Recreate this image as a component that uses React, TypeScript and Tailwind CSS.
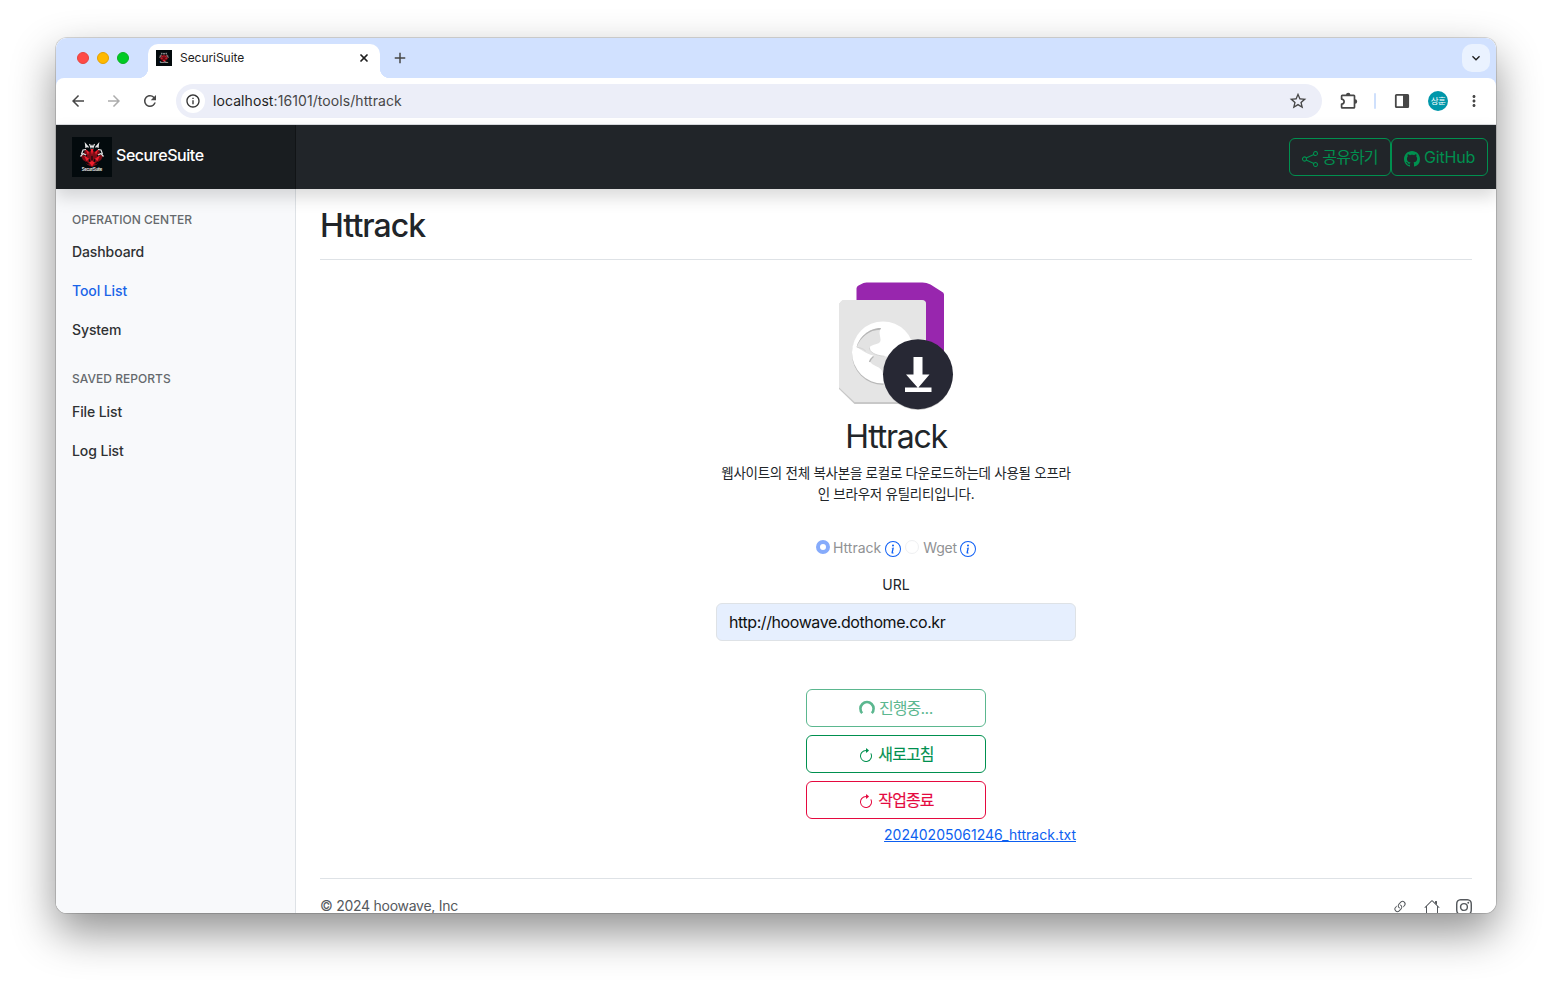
import type { ReactNode } from "react";
import { X } from "lucide-react";
import { BsShare, BsGithub, BsInfoCircle, BsArrowClockwise, BsInstagram, BsLink45Deg } from "react-icons/bs";
import {
  MdArrowBack,
  MdArrowForward,
  MdRefresh,
  MdInfoOutline,
  MdStarOutline,
  MdMoreVert,
  MdAdd,
  MdKeyboardArrowDown,
} from "react-icons/md";

function Crest({ className }: { className: string }) {
  return (
    <svg viewBox="0 0 40 40" className={className}>
      <rect width="40" height="40" fill="#030a0d" />
      <path d="M13 12l4 3 3-2 3 2 4-3 1 5 3 2-2 4-2.500 1.500-1.500 3-5 2.500-5-2.500-1.500-3L11 23l-2-4 3-2z" fill="#7d0d16" />
      <path d="M12 18.500l5.500 3.500-3 2zM28 18.500l-5.500 3.500 3 2zM18.500 12l1.500 6 1.500-6zM17 25l3 4.500 3-4.500-3-1zM13.500 12l2.500 6 1-3zM26.500 12l-2.500 6-1-3z" fill="#f01f2d" />
      <path d="M11 17l4 2M29 17l-4 2M17 22l1 3M23 22l-1 3M20 19v4M14 25l2.500 2M26 25l-2.500 2" stroke="#030a0d" strokeWidth="1.100" />
      <g fill="none" stroke="#e4e4e4" strokeWidth="1.200">
        <path d="M14 11l-.5-4 3 3.500M26 11l.5-4-3 3.500M17.500 7l1.500 3.500 1-2 1 2 1.500-3.500M9.500 17l1.500-4 3-.5M30.500 17L29 13l-3-.5" />
        <path d="M8.500 19.500l2.500-3 3 1.500M31.500 19.500l-2.500-3-3 1.500" />
      </g>
      <text x="20" y="33.600" textAnchor="middle" fontSize="4.200" fontWeight="600" fill="#f5f5f5" textLength="20.500" fontFamily="Inter, sans-serif">
        SecuriSuite
      </text>
    </svg>
  );
}

function TabStrip() {
  return (
    <div className="flex h-10 shrink-0 items-start bg-[#d1e1ff]">
      <div className="flex gap-2 pt-3.5 pl-[21px]">
        <span className="size-3 rounded-full border border-[#e5433f] bg-[#ff4a46]" />
        <span className="size-3 rounded-full border border-[#e3a100] bg-[#ffb900]" />
        <span className="size-3 rounded-full border border-[#0bb022] bg-[#00cb24]" />
      </div>
      <div className="relative mt-1.5 ml-[19px] flex h-[34px] w-[232px] items-center rounded-t-[10px] bg-white pr-2.5 pb-1.5 pl-2">
        <span className="absolute bottom-0 -left-2.5 size-2.5 bg-[radial-gradient(circle_at_0_0,transparent_10px,white_10.5px)]" />
        <span className="absolute -right-2.5 bottom-0 size-2.5 bg-[radial-gradient(circle_at_100%_0,transparent_10px,white_10.5px)]" />
        <Crest className="size-4" />
        <span className="ml-2 flex-1 text-[12px] tracking-[-0.05px] text-[#1f1f1f]">SecuriSuite</span>
        <X className="size-3 text-[#1f1f1f]" strokeWidth={3.4} />
      </div>
      <MdAdd className="mt-[11px] ml-[11px] size-[18px] text-[#474747]" />
      <div className="mt-1.5 mr-1.5 ml-auto flex size-7 items-center justify-center rounded-[10px] bg-[#eaf2ff]">
        <MdKeyboardArrowDown className="size-4 text-[#1f1f1f]" stroke="currentColor" />
      </div>
    </div>
  );
}

function Toolbar() {
  return (
    <div className="shrink-0 bg-[#d1e1ff]">
      <div className="flex h-[47px] items-center rounded-t-lg border-b border-[#dadce0] bg-white pl-[13px] text-[#474747]">
        <MdArrowBack className="size-[18px]" />
        <MdArrowForward className="ml-[18px] size-[18px] text-[#acacac]" />
        <MdRefresh className="ml-[18px] size-[18px]" />
        <div className="ml-[17px] flex h-[34px] w-[1146px] items-center rounded-full bg-[#eceef8] pl-[5px]">
          <span className="flex size-6 items-center justify-center rounded-full bg-white">
            <MdInfoOutline className="size-4 text-[#333]" />
          </span>
          <span className="ml-2 pb-0.5 text-[14px] tracking-[0.08px] whitespace-nowrap text-[#474747]">
            <span className="text-[#1f1f1f]">localhost</span>:16101/tools/httrack
          </span>
          <MdStarOutline className="mr-[14px] ml-auto size-5" />
        </div>
        <svg viewBox="0 0 20 20" className="ml-[17px] size-5" fill="none" stroke="#474747" strokeWidth="1.700">
          <path d="M3.300 4.300h11.500q.7 0 .7.700v11.200q0 .7-.7.700H3.300q-.7 0-.7-.7v-3.100a2.500 2.500 0 0 0 0-5V5q0-.7.700-.7z" strokeLinejoin="round" />
          <path d="M7 4a2.200 2.200 0 0 1 4.400 0zM16 8.300a2.200 2.200 0 0 1 0 4.400z" fill="#474747" stroke="none" />
        </svg>
        <span className="ml-[15px] h-4 w-0.5 rounded-full bg-[#cfe0fc]" />
        <svg viewBox="0 0 16 16" className="ml-[18px] size-4">
          <rect x="1.800" y="1.800" width="12.400" height="12.400" rx="0.800" fill="none" stroke="#474747" strokeWidth="1.800" />
          <rect x="9" y="1.500" width="5.500" height="13" fill="#474747" />
        </svg>
        <span className="ml-[18px] flex size-5 items-center justify-center rounded-full bg-[#0097aa] text-[8.5px] tracking-[-0.5px] text-white">
          상훈
        </span>
        <MdMoreVert className="ml-[17px] size-[18px]" />
      </div>
    </div>
  );
}

function HeaderButton({ children, width }: { children: ReactNode; width: string }) {
  return (
    <button
      className={`flex h-[38px] items-center justify-center gap-1 rounded-md border border-[#00904f] text-[16px] whitespace-nowrap text-[#00904f] ${width}`}
    >
      {children}
    </button>
  );
}

function Header() {
  return (
    <header className="relative z-10 flex h-16 shrink-0 bg-[#212529] shadow-[0_8px_16px_rgba(0,0,0,0.15)]">
      <div className="flex w-60 items-center border-r border-[#111416] bg-[#191d20] pl-4">
        <Crest className="size-10" />
        <span className="ml-1 pb-1 text-[16px] font-medium tracking-[-0.45px] text-white">SecureSuite</span>
      </div>
      <div className="ml-auto flex items-center pr-2">
        <HeaderButton width="w-[102px]">
          <BsShare className="mt-1 size-4" />
          <span className="tracking-[-0.9px]">공유하기</span>
        </HeaderButton>
        <HeaderButton width="w-[97px]">
          <BsGithub className="mt-1 size-4" />
          <span className="tracking-[-0.2px]">GitHub</span>
        </HeaderButton>
      </div>
    </header>
  );
}

function SideLink({ children, active }: { children: ReactNode; active?: boolean }) {
  return (
    <a className={`flex h-[39px] items-center text-[14px] font-medium tracking-[-0.1px] ${active ? "text-[#1a64e8]" : "text-[#2f3133]"}`}>
      {children}
    </a>
  );
}

function Sidebar() {
  return (
    <aside className="w-60 shrink-0 border-r border-[#dee2e6] bg-[#f8f9fb] pt-[22px] pl-4">
      <h6 className="h-[21px] text-[12px] leading-[18px] font-medium tracking-[0.01px] text-[#65696d]">OPERATION CENTER</h6>
      <SideLink>Dashboard</SideLink>
      <SideLink active>Tool List</SideLink>
      <SideLink>System</SideLink>
      <h6 className="mt-5 h-[23px] text-[12px] leading-[20px] font-medium tracking-[0.04px] text-[#65696d]">SAVED REPORTS</h6>
      <SideLink>File List</SideLink>
      <SideLink>Log List</SideLink>
    </aside>
  );
}

function ToolLogo() {
  return (
    <svg viewBox="0 0 128 136" className="h-[136px] w-32">
      <path d="M24.500 10.500q0-2 2-3l5-2.500q1.500-.5 3-.5h56q4 0 8 2l11 7q2.500 1 2.500 3V90h-87.500z" fill="#9826ae" />
      <path d="M11 22.500h79q4 0 4 4V126H22.500L7 111V26z" fill="#c8c8c8" />
      <path d="M10.500 22h79.500q4 0 4 4v98H22.500L7 109.500V26q1-2 3.500-4z" fill="#e5e5e5" />
      <circle cx="51" cy="75.800" r="31" fill="#b8b8b8" />
      <circle cx="51" cy="74.500" r="31" fill="#fff" />
      <path
        d="M24.700 69C27 60 36 50 49 50c-2 3-1.500 5.500-1 8 .5 3 1 4.500 0 6-1.500 2-5 2-9 4-3.500 2 0 6 2.500 7.500 4 2 8 3 13 3l6-.5v32l-9-2c0-6 0-12-2-16-3-4-9-4-11.500-8.500 0-2 1.500-4 3.500-6-3 0-10-4-16.800-8.500z"
        fill="#e3e3e3"
      />
      <path d="M24.700 69C27 60 36 50 49 50l-.8 1.800C37 52 29 59 24.700 69z" fill="#b5b5b5" />
      <path d="M37.500 69.500c-.5 4 5 8 15 8.800M24.700 69c3 1 6 1 9 4" fill="none" stroke="#d0d0d0" strokeWidth="0.900" />
      <path d="M37.500 84c.5-2 2-4 4-5.500" fill="none" stroke="#b5b5b5" strokeWidth="1.300" />
      <circle cx="86" cy="97.500" r="34.500" fill="#c0c0c0" />
      <circle cx="86" cy="96.200" r="35" fill="#272834" />
      <path d="M81.500 79h9v17.500h7L86 110 74 96.500h7.500zM73 109.500h26.500v4.500H73z" fill="#fff" />
    </svg>
  );
}

function ActionButton({ children, tone }: { children: ReactNode; tone: string }) {
  return (
    <button className={`flex h-[38px] w-[180px] items-center justify-center rounded-md border bg-white text-[16px] ${tone}`}>
      {children}
    </button>
  );
}

function Content() {
  return (
    <main className="flex min-w-0 flex-1 flex-col px-6">
      <h1 className="h-[71px] shrink-0 border-b border-[#dee2e6] pt-[15px] text-[32px] leading-[44px] font-medium tracking-[-0.95px] text-[#212529]">
        Httrack
      </h1>
      <div className="mx-auto flex w-[360px] flex-col items-center pt-[18px] text-[#212529]">
        <ToolLogo />
        <h2 className="mt-1 text-[32px] leading-[38px] tracking-[-1.25px]">Httrack</h2>
        <p className="mt-[7px] text-center text-[13.5px] leading-[21px] tracking-[-0.26px] whitespace-nowrap">
          웹사이트의 전체 복사본을 로컬로 다운로드하는데 사용될 오프라
          <br />인 브라우저 유틸리티입니다.
        </p>
        <div className="mt-8 flex h-[21px] items-center text-[14px] text-[#909294]">
          <span className="mb-0.5 size-3.5 rounded-full border-4 border-[#86abfb] bg-white" />
          <span className="ml-[3px]">Httrack</span>
          <BsInfoCircle className="mt-0.5 ml-1 size-4 text-[#0d5ff5]" />
          <span className="mb-0.5 ml-1 size-3.5 rounded-full border border-[#eff0f2]" />
          <span className="ml-1 tracking-[-0.15px]">Wget</span>
          <BsInfoCircle className="mt-0.5 ml-[3px] size-4 text-[#0d5ff5]" />
        </div>
        <label className="mt-4 text-[14px] leading-[21px]">URL</label>
        <div className="mt-2 flex h-[38px] w-full items-center rounded-md border border-[#dee2e6] bg-[#e6effe] px-3 text-[16px] tracking-[-0.42px] text-[#111]">
          http://hoowave.dothome.co.kr
        </div>
        <div className="mt-12 flex flex-col gap-2">
          <ActionButton tone="border-[#5bb78f] text-[#5bb78f]">
            <svg viewBox="0 0 16 16" className="mr-1 size-4">
              <path d="M3.200 13.200A6.600 6.600 0 1 1 12.800 13.200" fill="none" stroke="currentColor" strokeWidth="2.600" />
            </svg>
            <span className="pb-px tracking-[-0.4px]">
              <span className="tracking-[-0.9px]">진행중</span>...
            </span>
          </ActionButton>
          <ActionButton tone="border-[#00904f] text-[#00904f]">
            <BsArrowClockwise className="mt-1 mr-1 size-4" />
            <span className="pb-px tracking-[-0.9px] [-webkit-text-stroke:0.15px]">새로고침</span>
          </ActionButton>
          <ActionButton tone="border-[#e5093f] text-[#e5093f]">
            <BsArrowClockwise className="mt-1 mr-1 size-4" />
            <span className="pb-px tracking-[-0.9px] [-webkit-text-stroke:0.15px]">작업종료</span>
          </ActionButton>
        </div>
        <a className="mt-[5px] self-end text-[14px] leading-[22px] text-[#0d5ff0] underline">20240205061246_httrack.txt</a>
      </div>
      <footer className="mt-8 flex h-14 shrink-0 items-center border-t border-[#dee2e6] text-[14px] text-[#55595d]">
        <span className="pb-[3px] tracking-[-0.27px]">© 2024 hoowave, Inc</span>
        <span className="ml-auto flex gap-4">
          <BsLink45Deg className="size-4" />
          <svg viewBox="0 0 16 16" className="size-4" fill="currentColor">
            <path d="M2 13.500V7h1v6.500a.5.5 0 0 0 .5.5h9a.5.5 0 0 0 .5-.5V7h1v6.500a1.500 1.500 0 0 1-1.500 1.500h-9A1.500 1.500 0 0 1 2 13.500zm11-11V6l-2-2V2.500a.5.5 0 0 1 .5-.5h1a.5.5 0 0 1 .5.5z" />
            <path d="M7.293 1.500a1 1 0 0 1 1.414 0l6.647 6.646a.5.5 0 0 1-.708.708L8 2.207 1.354 8.854a.5.5 0 1 1-.708-.708L7.293 1.500z" />
          </svg>
          <BsInstagram className="size-4" />
        </span>
      </footer>
    </main>
  );
}

export default function App() {
  return (
    <div className="h-[987px] w-[1552px] overflow-hidden bg-white px-14 pt-[38px] font-['Inter','Noto_Sans_CJK_KR',sans-serif]">
      <div className="rounded-[11px] shadow-[0_0_0_1px_rgba(0,0,0,0.14),0_19px_44px_rgba(0,0,0,0.44)]">
        <div className="flex h-[875px] flex-col overflow-hidden rounded-[11px] bg-white">
          <TabStrip />
          <Toolbar />
          <Header />
          <div className="flex min-h-0 flex-1">
            <Sidebar />
            <Content />
          </div>
        </div>
      </div>
    </div>
  );
}
